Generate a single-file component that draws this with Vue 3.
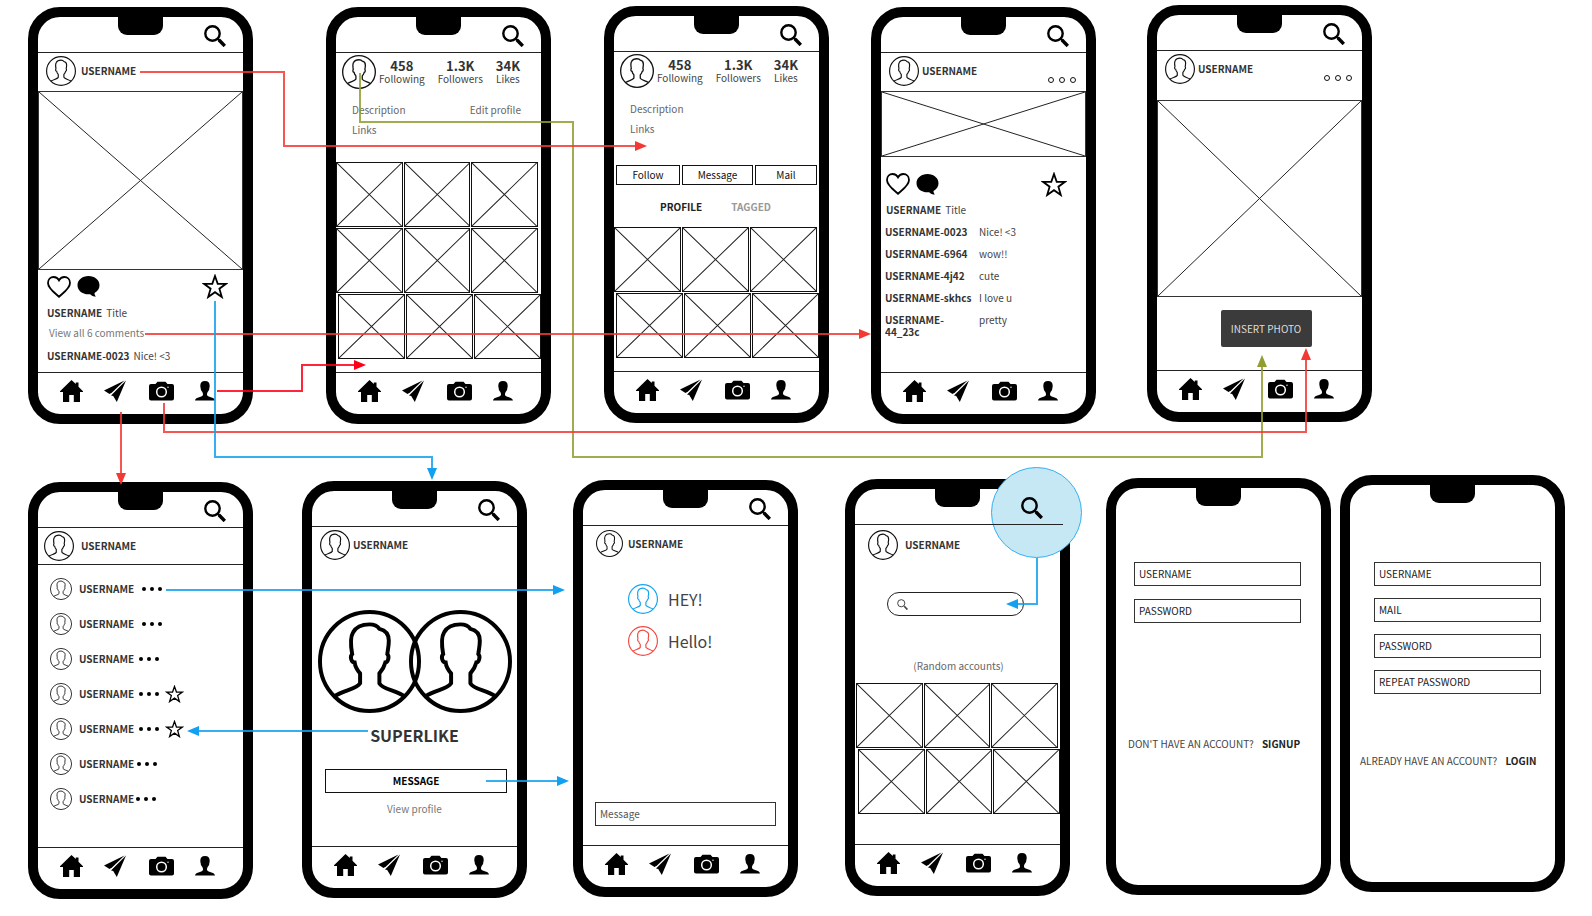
<script setup>
const phones = [
  { id: 'feed', x: 28, y: 7, search: true, nav: true },
  { id: 'own', x: 326, y: 7, search: true, nav: true },
  { id: 'other', x: 604, y: 6, search: true, nav: true },
  { id: 'post', x: 871, y: 7, search: true, nav: true },
  { id: 'upload', x: 1147, y: 5, search: true, nav: true },
  { id: 'inbox', x: 28, y: 482, search: true, nav: true },
  { id: 'match', x: 302, y: 481, search: true, nav: true },
  { id: 'chat', x: 573, y: 480, search: true, nav: true },
  { id: 'explore', x: 845, y: 479, search: true, nav: true },
  { id: 'login', x: 1106, y: 478, search: false, nav: false },
  { id: 'signup', x: 1340, y: 475, search: false, nav: false },
]

const navItems = ['home', 'send', 'camera', 'person']
const withUser = ['feed', 'post', 'upload', 'inbox', 'match', 'chat', 'explore']
const gridRows = { own: 3, other: 2, explore: 2 }
const photos = ['feed', 'post', 'upload']

const stats = [
  { value: '458', label: 'Following' },
  { value: '1.3K', label: 'Followers' },
  { value: '34K', label: 'Likes' },
]

const comments = [
  { user: 'USERNAME-0023', text: 'Nice! <3' },
  { user: 'USERNAME-6964', text: 'wow!!' },
  { user: 'USERNAME-4j42', text: 'cute' },
  { user: 'USERNAME-skhcs', text: 'I love u' },
  { user: 'USERNAME-44_23c', text: 'pretty' },
]

const threads = [
  { gap: 8, star: false },
  { gap: 8, star: false },
  { gap: 5, star: false },
  { gap: 5, star: true },
  { gap: 5, star: true },
  { gap: 3, star: false },
  { gap: 2, star: false },
]

const forms = {
  login: {
    fields: [['USERNAME', 'text'], ['PASSWORD', 'password']],
    question: "DON'T HAVE AN ACCOUNT?",
    link: 'SIGNUP',
  },
  signup: {
    fields: [['USERNAME', 'text'], ['MAIL', 'email'], ['PASSWORD', 'password'], ['REPEAT PASSWORD', 'password']],
    question: 'ALREADY HAVE AN ACCOUNT?',
    link: 'LOGIN',
  },
}

const connectors = [
  { tone: 'olive', d: 'M360 73V122H573V457H1262V366', head: '1262,355 1257,367 1267,367' },
  { tone: 'red', d: 'M140 72H284V146H636', head: '647,146 635,141 635,151' },
  { tone: 'red', d: 'M145 334H860', head: '871,334 859,329 859,339' },
  { tone: 'scarlet', d: 'M217 391H302V365H355', head: '366,365 354,360 354,370' },
  { tone: 'red', d: 'M164 403V432H1306V359', head: '1306,348 1301,360 1311,360' },
  { tone: 'red', d: 'M121 412V474', head: '121,485 116,473 126,473' },
  { tone: 'blue', d: 'M215 301V457H432V469', head: '432,480 427,468 437,468' },
  { tone: 'blue', d: 'M166 590H554', head: '565,590 553,585 553,595' },
  { tone: 'blue', d: 'M368 731H198', head: '187,731 199,726 199,736' },
  { tone: 'blue', d: 'M486 781H558', head: '569,781 557,776 557,786' },
  { tone: 'blue', d: 'M1037 558V604H1017', head: '1006,604 1018,599 1018,609' },
]
</script>

<template>
  <main class="board">
    <svg class="defs" aria-hidden="true">
      <symbol id="i-avatar" viewBox="0 0 104 104" overflow="visible">
        <circle cx="52" cy="52" r="50" />
        <path d="M17 87C26 81 39 80 42.500 74V64C39 60 37.500 57 37 53C33.500 53 32 47 34.500 44.500C33 36 32 28 35.500 22.500C39 16 46 14.500 52 14.500C57 14.500 60 16 62 19C69 20.500 71.500 25 71.500 31C71.500 36 70.500 40 70 44.500C72.500 47 70.500 53 68 53C67 57 65.500 60 62 64V74C65 80 78 81 87 87" />
      </symbol>
      <symbol id="i-search" viewBox="0 0 22 22">
        <circle cx="8.500" cy="8.500" r="7.200" />
        <path d="M13.500 13.500L15.500 15.500" />
        <path class="handle" d="M15 15L20.800 21" />
      </symbol>
      <symbol id="i-home" viewBox="0 0 23 22">
        <path d="M11.500 0L15.800 4V2.500H18.500V6.700L23 11.200V12H20V22H13.800V15H9.200V22H3V12H0V11.200Z" />
      </symbol>
      <symbol id="i-send" viewBox="0 0 22 22">
        <path d="M0 10.600L20.500 .6L8 12.600L5.500 14Z" />
        <path d="M22 .6L12.800 22L9.200 16L7 15.600L9 13.600Z" />
      </symbol>
      <symbol id="i-camera" viewBox="0 0 25 20">
        <path d="M2 3H6.500L8.500 .8H16.500L18.500 3H23Q25 3 25 5V17.500Q25 19.500 23 19.500H2Q0 19.500 0 17.500V5Q0 3 2 3Z" />
        <circle class="lens" cx="12.500" cy="11" r="4.800" />
        <circle class="flash" cx="19" cy="6.200" r=".7" />
      </symbol>
      <symbol id="i-person" viewBox="0 0 20 20">
        <path d="M10 0C13.300 0 14.700 1.800 14.700 4.800C14.700 5.800 14.600 6.500 14.300 7.200C14.300 9 13.600 9.700 13 10.600C12.300 11.800 12 12.500 12 13.800C12 16.300 19.500 15.800 20 19.500H0C.5 15.800 8 16.300 8 13.800C8 12.500 7.700 11.800 7 10.600C6.400 9.700 5.700 9 5.700 7.200C5.400 6.500 5.300 5.800 5.300 4.800C5.300 1.800 6.700 0 10 0Z" />
      </symbol>
      <symbol id="i-heart" viewBox="0 0 24 22">
        <path d="M12 20.800C8 17 1 12.500 1 7C1 3.300 3.600 1 6.600 1C9.200 1 11 2.300 12 4.300C13 2.300 14.800 1 17.400 1C20.400 1 23 3.300 23 7C23 12.500 16 17 12 20.800Z" />
      </symbol>
      <symbol id="i-bubble" viewBox="0 0 23 21">
        <path d="M11.500 0C17.800 0 22.500 4 22.500 9.200C22.500 12.600 20.600 15.300 17.500 16.900C17.500 18.500 18.200 19.700 19 20.600C16.500 20.400 14.500 19.600 13.200 18.200C5.500 18.900 .5 14.600 .5 9.200C.5 4 5.200 0 11.500 0Z" />
      </symbol>
      <symbol id="i-star" viewBox="0 0 26 25">
        <path d="M13 2L15.700 9.800H24L17.400 14.700L19.800 23L13 18.200L6.200 23L8.600 14.700L2 9.800H10.300Z" />
      </symbol>
    </svg>

    <section
      v-for="phone in phones"
      :key="phone.id"
      class="phone"
      :class="phone.id"
      :style="{ left: phone.x + 'px', top: phone.y + 'px' }"
    >
      <span class="notch"></span>
      <span v-if="phone.id === 'explore'" class="spot"></span>

      <header v-if="phone.search" class="topbar">
        <button class="plain" aria-label="Search">
          <svg class="search-icon"><use href="#i-search" /></svg>
        </button>
      </header>

      <div v-if="withUser.includes(phone.id)" class="user">
        <svg class="avatar"><use href="#i-avatar" /></svg>
        <b>USERNAME</b>
        <button v-if="phone.id === 'post' || phone.id === 'upload'" class="plain more" aria-label="More">
          <i v-for="n in 3" :key="n" class="ring"></i>
        </button>
      </div>

      <template v-if="phone.id === 'own' || phone.id === 'other'">
        <div class="profile">
          <svg class="avatar"><use href="#i-avatar" /></svg>
          <div v-for="s in stats" :key="s.label" class="stat">
            <strong>{{ s.value }}</strong>
            <span>{{ s.label }}</span>
          </div>
        </div>
        <div class="about">
          <p>Description</p>
          <a v-if="phone.id === 'own'" href="#">Edit profile</a>
        </div>
        <div class="about"><p>Links</p></div>
      </template>

      <template v-if="phone.id === 'other'">
        <div class="contact">
          <button class="box">Follow</button>
          <button class="box">Message</button>
          <button class="box">Mail</button>
        </div>
        <div class="tabs">
          <button class="plain">PROFILE</button>
          <button class="plain off">TAGGED</button>
        </div>
      </template>

      <template v-if="phone.id === 'explore'">
        <label class="pill">
          <svg class="pill-icon"><use href="#i-search" /></svg>
          <input type="search" aria-label="Search accounts" />
        </label>
        <p class="caption">(Random accounts)</p>
      </template>

      <div v-if="gridRows[phone.id]" class="grid">
        <div v-for="r in gridRows[phone.id]" :key="r" class="grid-row">
          <svg v-for="c in 3" :key="c" class="cross" viewBox="0 0 10 10" preserveAspectRatio="none">
            <path d="M0 0L10 10M10 0L0 10" />
          </svg>
        </div>
      </div>

      <svg v-if="photos.includes(phone.id)" class="cross photo" viewBox="0 0 10 10" preserveAspectRatio="none">
        <path d="M0 0L10 10M10 0L0 10" />
      </svg>

      <template v-if="phone.id === 'feed' || phone.id === 'post'">
        <div class="actions">
          <button class="plain" aria-label="Like"><svg class="heart"><use href="#i-heart" /></svg></button>
          <button class="plain" aria-label="Comment"><svg class="bubble"><use href="#i-bubble" /></svg></button>
          <button class="plain last" aria-label="Superlike"><svg class="star"><use href="#i-star" /></svg></button>
        </div>
        <p class="line"><b>USERNAME</b><span>Title</span></p>
      </template>

      <template v-if="phone.id === 'feed'">
        <a class="line all" href="#">View all 6 comments</a>
        <p class="line"><b>USERNAME-0023</b><span>Nice! &lt;3</span></p>
      </template>

      <ul v-if="phone.id === 'post'" class="comments">
        <li v-for="c in comments" :key="c.user"><b>{{ c.user }}</b><span>{{ c.text }}</span></li>
      </ul>

      <button v-if="phone.id === 'upload'" class="insert">INSERT PHOTO</button>

      <ul v-if="phone.id === 'inbox'" class="threads">
        <li v-for="(t, i) in threads" :key="i">
          <svg class="avatar small"><use href="#i-avatar" /></svg>
          <b>USERNAME</b>
          <span class="dots" :style="{ marginLeft: t.gap + 'px' }"><i v-for="n in 3" :key="n"></i></span>
          <svg v-if="t.star" class="star small"><use href="#i-star" /></svg>
        </li>
      </ul>

      <template v-if="phone.id === 'match'">
        <div class="pair">
          <svg class="avatar big"><use href="#i-avatar" /></svg>
          <svg class="avatar big"><use href="#i-avatar" /></svg>
        </div>
        <h2>SUPERLIKE</h2>
        <button class="box message">MESSAGE</button>
        <a class="view" href="#">View profile</a>
      </template>

      <template v-if="phone.id === 'chat'">
        <div class="bubbles">
          <p class="said sky"><svg class="avatar"><use href="#i-avatar" /></svg>HEY!</p>
          <p class="said rose"><svg class="avatar"><use href="#i-avatar" /></svg>Hello!</p>
        </div>
        <input class="field compose" type="text" placeholder="Message" aria-label="Message" />
      </template>

      <form v-if="forms[phone.id]" class="form" @submit.prevent>
        <input
          v-for="[label, type] in forms[phone.id].fields"
          :key="label"
          class="field"
          :type="type"
          :placeholder="label"
          :aria-label="label"
        />
        <p class="switch"><span>{{ forms[phone.id].question }}</span><a href="#">{{ forms[phone.id].link }}</a></p>
      </form>

      <nav v-if="phone.nav" class="nav">
        <button v-for="item in navItems" :key="item" class="plain" :aria-label="item">
          <svg :class="'nav-' + item"><use :href="'#i-' + item" /></svg>
        </button>
      </nav>
    </section>

    <svg class="wires" aria-hidden="true">
      <g v-for="(c, i) in connectors" :key="i" :class="c.tone">
        <path :d="c.d" />
        <polygon :points="c.head" />
      </g>
    </svg>
  </main>
</template>

<style>
body {
  margin: 0;
  background: #fff;
}
</style>

<style scoped>
.board {
  position: relative;
  min-height: 100vh;
  overflow: hidden;
  font-family: "Noto Sans CJK SC", "Noto Sans CJK JP", "Open Sans", sans-serif;
  font-size: 10px;
  line-height: 12px;
  color: #444;
}
.defs {
  position: absolute;
  width: 0;
  height: 0;
}
.board *,
.board {
  box-sizing: border-box;
}
p, h2, ul {
  margin: 0;
  padding: 0;
  list-style: none;
}
a {
  color: inherit;
  text-decoration: none;
}
b {
  color: #333;
}
svg {
  display: block;
  flex: none;
}
button, input {
  font: inherit;
  color: inherit;
  margin: 0;
}
.plain {
  display: block;
  padding: 0;
  border: 0;
  background: none;
  color: #000;
}
.phone {
  position: absolute;
  display: flex;
  flex-direction: column;
  width: 225px;
  min-height: 417px;
  border: 10px solid #000;
  border-radius: 32px;
  background: #fff;
}
.notch {
  position: absolute;
  top: -1px;
  left: 80px;
  width: 45px;
  height: 19px;
  background: #000;
  border-radius: 0 0 9px 9px;
}
.spot {
  position: absolute;
  left: 136px;
  top: -22px;
  width: 91px;
  height: 91px;
  border: 1px solid #35b0f0;
  border-radius: 50%;
  background: #c6e8f5;
}
.topbar {
  position: relative;
  display: flex;
  align-items: flex-start;
  justify-content: flex-end;
  height: 36px;
  padding: 8px 17px 0 0;
  border-bottom: 1px solid #222;
}
.explore .topbar {
  margin-right: -3px;
  padding-right: 20px;
}
.search-icon {
  width: 22px;
  height: 22px;
  fill: none;
  stroke: #000;
  stroke-width: 2.4;
}
.avatar {
  width: 30px;
  height: 30px;
  fill: none;
  stroke: #111;
  stroke-width: 4px;
}
.avatar.small {
  width: 22px;
  height: 22px;
}
.avatar.big {
  width: 103px;
  height: 103px;
  stroke: #000;
}
.user {
  display: flex;
  align-items: center;
  gap: 5px;
  height: 35px;
  padding: 0 10px 0 8px;
}
.post .user,
.upload .user,
.match .user {
  gap: 3px;
}
.inbox .user {
  gap: 7px;
  height: 37px;
  padding: 0 0 1px 6px;
  border-bottom: 1px solid #222;
}
.chat .user {
  padding-left: 13px;
}
.chat .user .avatar {
  width: 27px;
  height: 27px;
}
.explore .user {
  gap: 7px;
  height: 40px;
  padding-left: 13px;
}
.more {
  display: flex;
  gap: 5px;
  margin: 18px 0 0 auto;
}
.ring {
  width: 6px;
  height: 6px;
  border: 1px solid #111;
  border-radius: 50%;
}
.cross {
  min-width: 0;
  border: 1px solid #111;
  fill: none;
  stroke: #222;
  stroke-width: 1px;
}
.cross path {
  vector-effect: non-scaling-stroke;
}
.photo {
  width: 100%;
  border-color: #333;
}
.feed .photo {
  height: 179px;
  margin-top: 3px;
}
.post .photo {
  height: 66px;
  margin-top: 3px;
}
.upload .photo {
  height: 197px;
  margin-top: 14px;
}
.actions {
  display: flex;
  align-items: center;
  gap: 6px;
  height: 33px;
  padding: 0 15px 0 9px;
}
.post .actions {
  height: 47px;
  padding: 7px 19px 0 5px;
}
.last {
  margin-left: auto;
}
.heart, .star {
  fill: none;
  stroke: #000;
  stroke-width: 1.8;
}
.heart {
  width: 24px;
  height: 22px;
}
.bubble {
  width: 23px;
  height: 21px;
}
.star {
  width: 26px;
  height: 25px;
}
.star.small {
  width: 19px;
  height: 18px;
}
.line {
  display: flex;
  gap: 4px;
  padding-left: 9px;
  line-height: 20px;
}
.post .line {
  padding-left: 5px;
  line-height: 12px;
}
.all {
  padding-left: 11px;
  color: #777;
}
.all + .line {
  margin-top: 3px;
}
.comments {
  padding: 5px 0 0 4px;
}
.comments li {
  display: flex;
  gap: 6px;
  padding: 5px 0;
}
.comments b {
  width: 88px;
}
.insert {
  align-self: center;
  width: 91px;
  height: 37px;
  margin: 13px 0 0 13px;
  padding: 0;
  border: 0;
  border-radius: 2px;
  background: #3b3b3b;
  color: #ddd;
}
.profile {
  display: flex;
  gap: 13px;
  align-items: center;
  height: 38px;
  padding-left: 6px;
}
.profile .avatar {
  width: 34px;
  height: 34px;
  margin-right: -10px;
}
.stat {
  display: flex;
  flex-direction: column;
  align-items: center;
}
.stat strong {
  font-size: 13px;
  line-height: 14px;
  color: #333;
}
.about {
  display: flex;
  justify-content: space-between;
  padding: 0 20px 0 16px;
  line-height: 20px;
  color: #666;
}
.profile + .about {
  margin-top: 9px;
}
.grid {
  display: flex;
  flex-direction: column;
  gap: 1px;
}
.own .grid {
  margin-top: 22px;
}
.other .grid {
  margin-top: 14px;
}
.explore .grid {
  margin: 11px 0 0 1px;
}
.grid-row {
  display: grid;
  grid-template-columns: repeat(3, 1fr);
  gap: 1px;
  height: 65px;
  margin-right: 3px;
}
.explore .grid-row,
.other .grid-row {
  margin-right: 2px;
}
.grid-row .cross {
  width: 100%;
  height: 100%;
}
.phone .grid-row:last-child {
  margin: 0 0 0 2px;
}
.box {
  border: 1px solid #111;
  background: #fff;
  color: #111;
  padding: 0;
}
.contact {
  display: grid;
  grid-template-columns: 64px 71px 62px;
  gap: 2px;
  height: 20px;
  margin: 26px 0 0 2px;
}
.tabs {
  display: flex;
  gap: 29px;
  margin: 16px 0 0 46px;
  font-weight: 700;
}
.tabs .plain {
  color: #222;
}
.tabs .off {
  color: #999;
}
.threads {
  padding: 6px 0 0 12px;
}
.threads li {
  display: flex;
  align-items: center;
  height: 35px;
}
.threads b {
  margin-left: 7px;
}
.dots {
  display: flex;
  gap: 4px;
}
.dots i {
  width: 4px;
  height: 4px;
  border-radius: 50%;
  background: #000;
}
.dots + .star {
  margin-left: 6px;
}
.pair {
  display: flex;
  margin: 48px 0 0 6px;
}
.pair .big + .big {
  margin-left: -12px;
}
.match h2 {
  margin-top: 10px;
  font-size: 16px;
  line-height: 24px;
  text-align: center;
  color: #333;
}
.message {
  height: 24px;
  margin: 22px 10px 0 13px;
  font-weight: 700;
  color: #000;
}
.view {
  align-self: center;
  margin-top: 10px;
  color: #777;
}
.bubbles {
  display: flex;
  flex-direction: column;
  gap: 12px;
  padding: 23px 0 0 45px;
}
.said {
  display: flex;
  align-items: center;
  gap: 10px;
  font-size: 16px;
}
.sky .avatar {
  stroke: #12a5f0;
}
.rose .avatar {
  stroke: #f24a43;
}
.field {
  height: 24px;
  padding: 0 4px 2px;
  border: 1px solid #333;
  border-radius: 0;
  background: #fff;
  outline: 0;
}
.field::placeholder {
  color: #222;
  opacity: 1;
}
.compose {
  width: 181px;
  margin: auto 0 19px 12px;
}
.compose::placeholder {
  color: #555;
}
.pill {
  display: flex;
  align-items: center;
  height: 24px;
  margin: 27px 36px 0 32px;
  padding: 0 9px;
  border: 1px solid #222;
  border-radius: 12px;
}
.pill-icon {
  width: 11px;
  height: 11px;
  fill: none;
  stroke: #444;
  stroke-width: 2px;
}
.pill input {
  flex: 1;
  min-width: 0;
  border: 0;
  padding: 0 4px;
  outline: 0;
  background: none;
}
.caption {
  margin-top: 44px;
  padding-left: 2px;
  text-align: center;
  color: #666;
}
.form {
  display: flex;
  flex-direction: column;
  gap: 13px;
  padding-top: 74px;
}
.form .field {
  width: 167px;
  margin-left: 18px;
}
.signup .form {
  gap: 12px;
  padding-top: 77px;
}
.signup .field {
  margin-left: 24px;
}
.switch {
  display: flex;
  gap: 8px;
  margin: 102px 0 0 12px;
  white-space: nowrap;
}
.signup .switch {
  margin: 49px 0 0 10px;
}
.switch a {
  font-weight: 700;
  color: #222;
}
.nav {
  display: grid;
  grid-template-columns: 44px 45px 46px 20px;
  align-items: center;
  height: 42px;
  margin-top: auto;
  padding: 0 0 6px 22px;
  border-top: 1px solid #222;
}
.compose + .nav {
  margin-top: 0;
}
.nav-home {
  width: 23px;
  height: 22px;
}
.nav-send {
  width: 22px;
  height: 22px;
}
.nav-camera {
  width: 25px;
  height: 20px;
}
.nav-person {
  width: 20px;
  height: 20px;
}
.lens {
  fill: none;
  stroke: #fff;
  stroke-width: 1.5;
}
.flash {
  fill: #fff;
}
.handle {
  stroke-width: 3.4;
}
.wires {
  position: absolute;
  inset: 0;
  width: 100%;
  height: 100%;
  pointer-events: none;
}
.wires path {
  fill: none;
  stroke-width: 2px;
  stroke-opacity: .85;
}
.red {
  stroke: #f23a33;
  fill: #f23a33;
}
.scarlet {
  stroke: #ff0018;
  fill: #ff0018;
}
.blue {
  stroke: #12a0f0;
  fill: #12a0f0;
}
.olive {
  stroke: #8f9e2f;
  fill: #8f9e2f;
}
.wires polygon {
  stroke: none;
}
</style>
